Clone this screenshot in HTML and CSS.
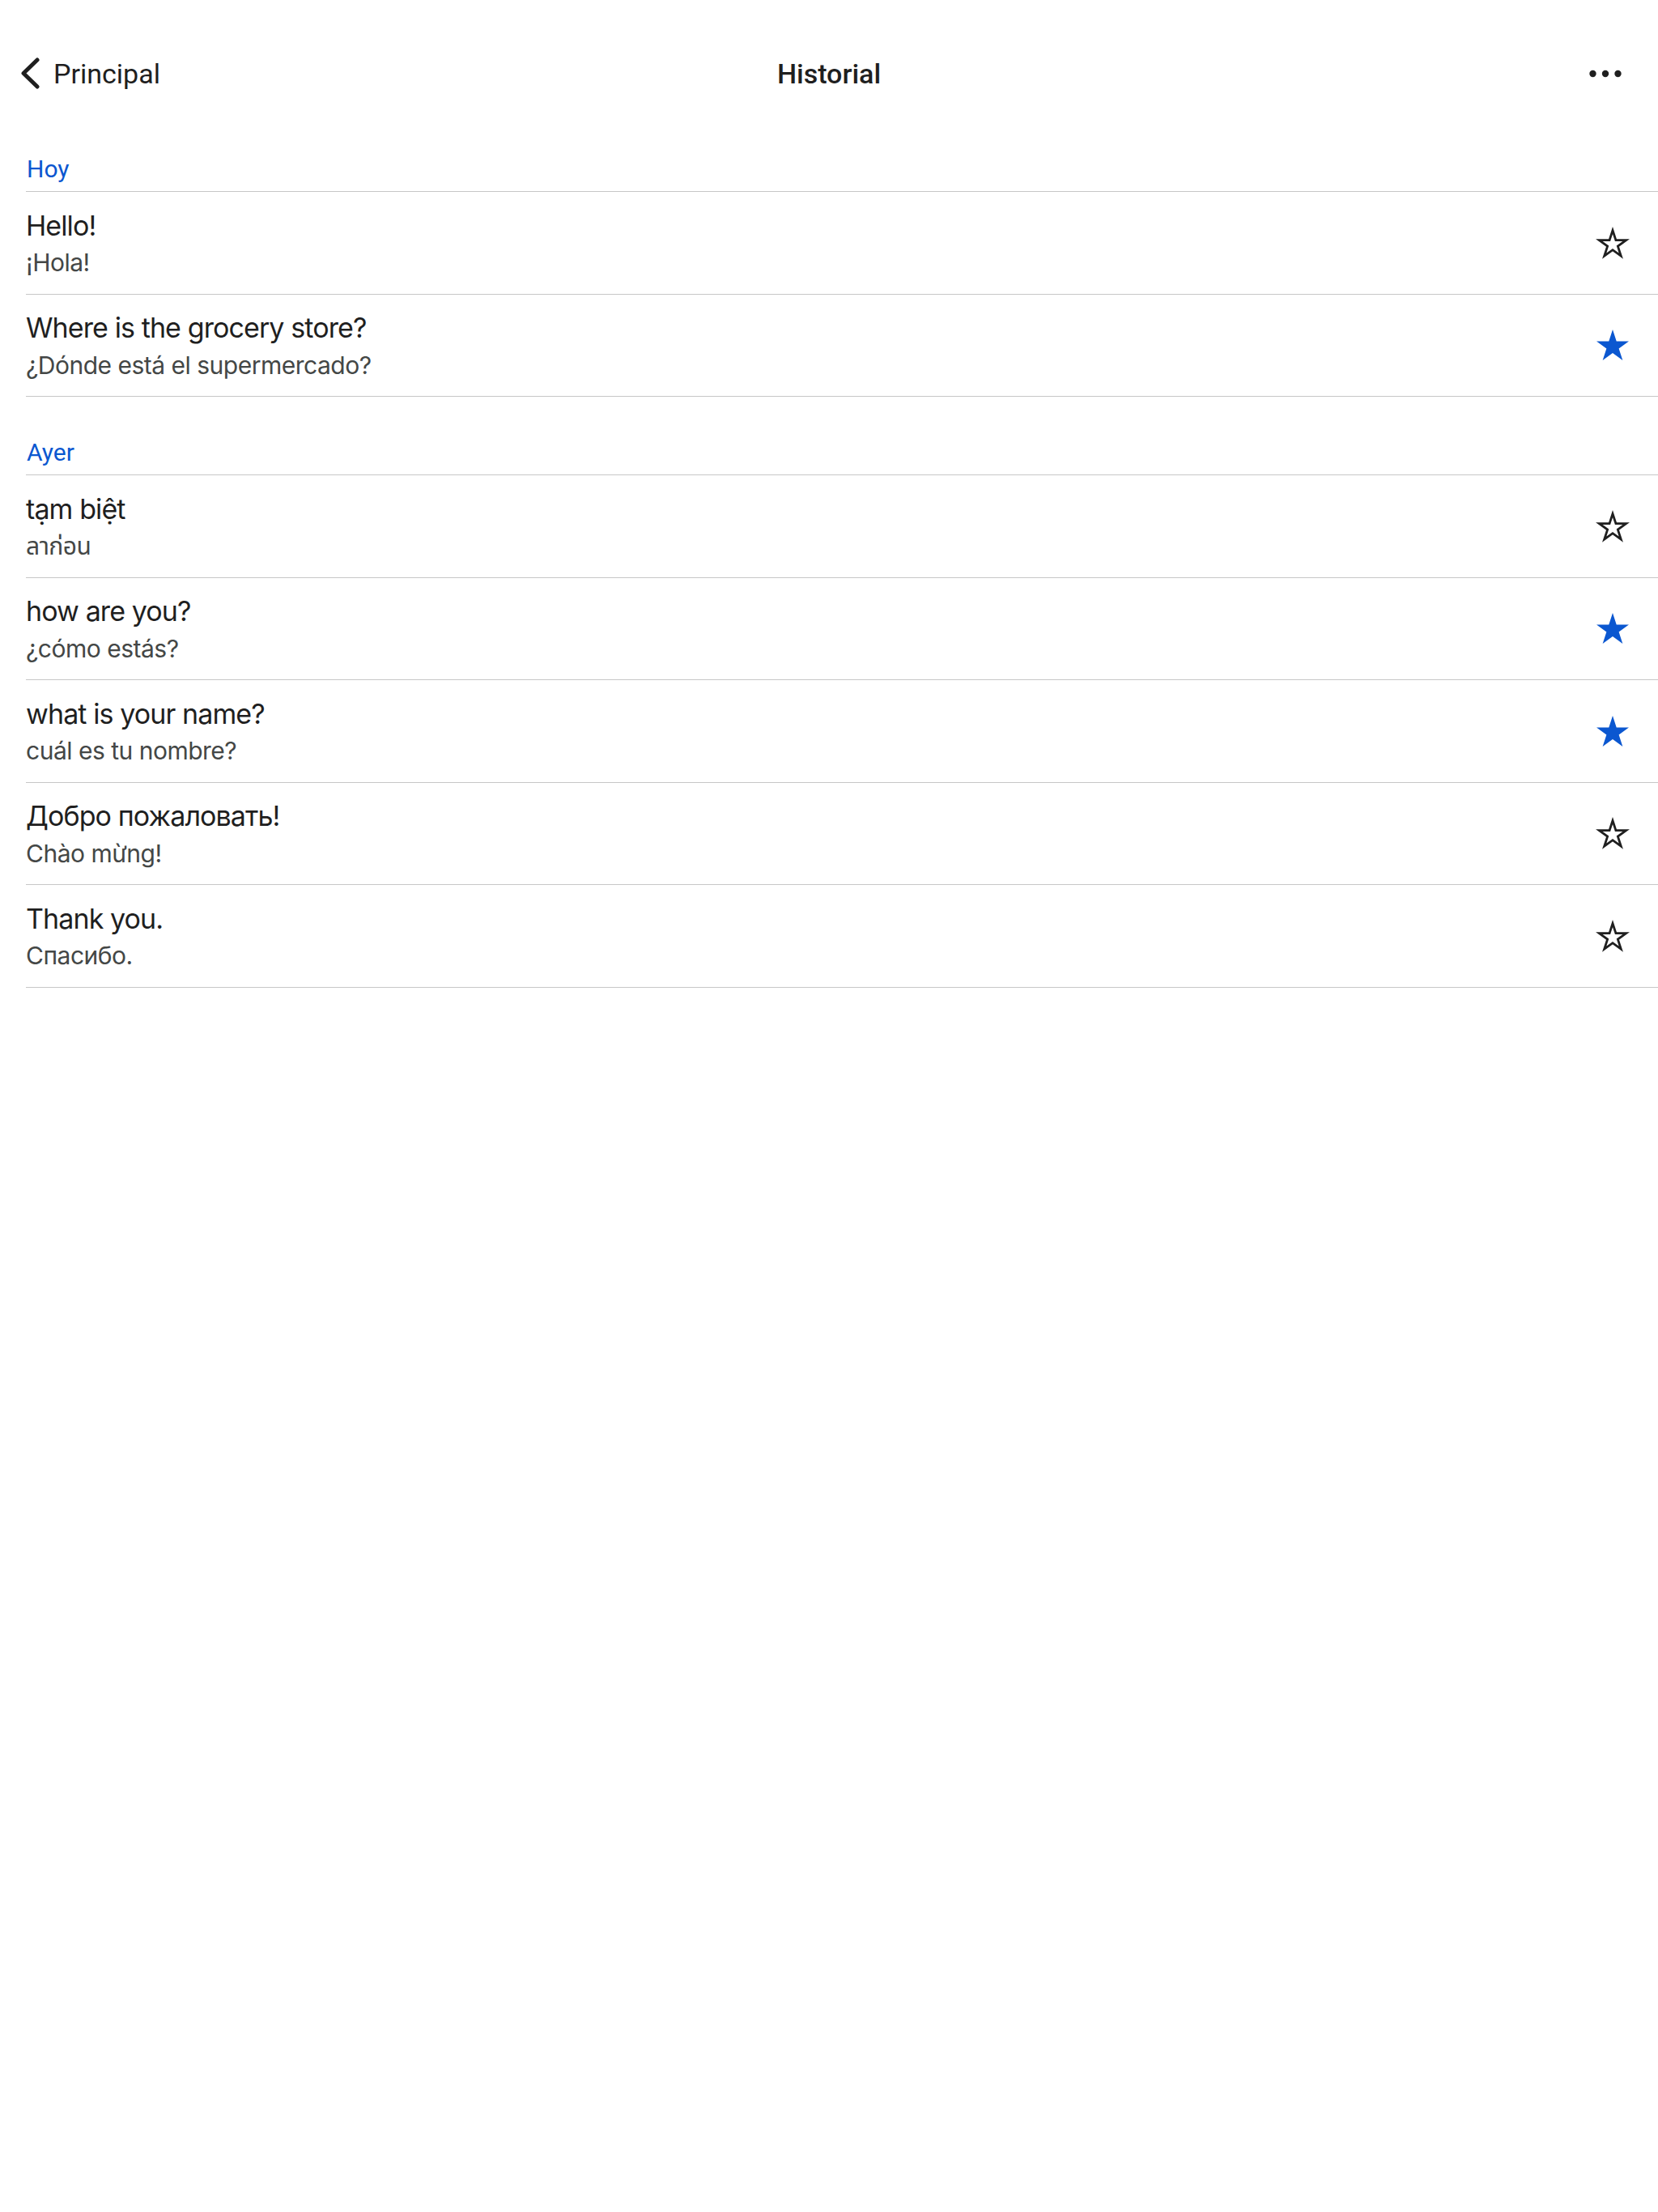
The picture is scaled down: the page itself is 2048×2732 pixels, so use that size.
FILE: index.html
```html
<!DOCTYPE html>
<html lang="es">
<head>
<meta charset="utf-8">
<title>Historial</title>
<link rel="stylesheet" href="styles.css">
</head>
<body>
<header class="nav">
  <div class="back">
    <svg class="chevron" width="30" height="40" viewBox="0 0 30 40"><path d="M26 3 L9 19.5 L26 36" fill="none" stroke="#1f1f1f" stroke-width="5" stroke-linecap="round" stroke-linejoin="round"/></svg>
    <span class="back-label">Principal</span>
  </div>
  <div class="title">Historial</div>
  <div class="more">
    <svg width="40" height="12" viewBox="0 0 40 12"><circle cx="4.5" cy="6" r="4.2" fill="#1f1f1f"/><circle cx="20" cy="6" r="4.2" fill="#1f1f1f"/><circle cx="35.5" cy="6" r="4.2" fill="#1f1f1f"/></svg>
  </div>
</header>

<main class="list">
  <section class="group">
    <div class="group-head"><span>Hoy</span></div>
    <div class="row">
      <div class="texts"><div class="src">Hello!</div><div class="dst">¡Hola!</div></div>
      <svg class="star" width="48" height="48" viewBox="0 0 48 48"><polygon class="star-outline" points="24,8.5 27.93,20.59 40.64,20.59 30.36,28.07 34.29,40.16 24,32.69 13.71,40.16 17.64,28.07 7.36,20.59 20.07,20.59"/></svg>
    </div>
    <div class="row">
      <div class="texts"><div class="src">Where is the grocery store?</div><div class="dst">¿Dónde está el supermercado?</div></div>
      <svg class="star" width="48" height="48" viewBox="0 0 48 48"><polygon class="star-filled" points="24,5 28.71,19.51 43.97,19.51 31.63,28.48 36.34,42.99 24,34.02 11.66,42.99 16.37,28.48 4.03,19.51 19.29,19.51"/></svg>
    </div>
  </section>

  <section class="group">
    <div class="group-head"><span>Ayer</span></div>
    <div class="row">
      <div class="texts"><div class="src">tạm biệt</div><div class="dst">ลาก่อน</div></div>
      <svg class="star" width="48" height="48" viewBox="0 0 48 48"><polygon class="star-outline" points="24,8.5 27.93,20.59 40.64,20.59 30.36,28.07 34.29,40.16 24,32.69 13.71,40.16 17.64,28.07 7.36,20.59 20.07,20.59"/></svg>
    </div>
    <div class="row">
      <div class="texts"><div class="src">how are you?</div><div class="dst">¿cómo estás?</div></div>
      <svg class="star" width="48" height="48" viewBox="0 0 48 48"><polygon class="star-filled" points="24,5 28.71,19.51 43.97,19.51 31.63,28.48 36.34,42.99 24,34.02 11.66,42.99 16.37,28.48 4.03,19.51 19.29,19.51"/></svg>
    </div>
    <div class="row">
      <div class="texts"><div class="src">what is your name?</div><div class="dst">cuál es tu nombre?</div></div>
      <svg class="star" width="48" height="48" viewBox="0 0 48 48"><polygon class="star-filled" points="24,5 28.71,19.51 43.97,19.51 31.63,28.48 36.34,42.99 24,34.02 11.66,42.99 16.37,28.48 4.03,19.51 19.29,19.51"/></svg>
    </div>
    <div class="row">
      <div class="texts"><div class="src">Добро пожаловать!</div><div class="dst">Chào mừng!</div></div>
      <svg class="star" width="48" height="48" viewBox="0 0 48 48"><polygon class="star-outline" points="24,8.5 27.93,20.59 40.64,20.59 30.36,28.07 34.29,40.16 24,32.69 13.71,40.16 17.64,28.07 7.36,20.59 20.07,20.59"/></svg>
    </div>
    <div class="row">
      <div class="texts"><div class="src">Thank you.</div><div class="dst">Спасибо.</div></div>
      <svg class="star" width="48" height="48" viewBox="0 0 48 48"><polygon class="star-outline" points="24,8.5 27.93,20.59 40.64,20.59 30.36,28.07 34.29,40.16 24,32.69 13.71,40.16 17.64,28.07 7.36,20.59 20.07,20.59"/></svg>
    </div>
  </section>
</main>
</body>
</html>
```

FILE: styles.css
```css
* { box-sizing: border-box; }
html, body {
  margin: 0;
  padding: 0;
  background: #ffffff;
}
body {
  width: 2048px;
  min-height: 2732px;
  font-family: Inter, "Noto Sans", "Noto Sans Thai", sans-serif;
  color: #1f1f1f;
}

.nav {
  height: 140px;
  padding: 48px 20px 6px 20px;
  display: grid;
  grid-template-columns: 1fr auto 1fr;
  align-items: center;
}
.back {
  display: flex;
  align-items: center;
  gap: 16px;
}
.chevron { display: block; }
.back-label {
  font-family: Roboto, "Noto Sans", sans-serif;
  font-size: 34px;
  line-height: 40px;
  color: #1f1f1f;
}
.title {
  font-family: Roboto, "Noto Sans", sans-serif;
  font-weight: 500;
  font-size: 34px;
  line-height: 40px;
  color: #1f1f1f;
}
.more {
  justify-self: end;
  display: flex;
  align-items: center;
  margin-right: 25px;
}
.more svg { display: block; }

.list {
  margin-left: 32px;
}
.group-head {
  height: 97px;
  display: flex;
  align-items: flex-end;
  padding-bottom: 9px;
  border-bottom: 1px solid #c7c7c7;
}
.group-head span {
  font-family: Roboto, "Noto Sans", sans-serif;
  font-size: 30px;
  line-height: 36px;
  color: #0b57d0;
  padding-left: 1px;
}
.row {
  height: 126.5px;
  display: flex;
  align-items: center;
  justify-content: space-between;
  padding-right: 32px;
  border-bottom: 1px solid #c7c7c7;
}
.texts {
  padding-top: 3px;
}
.src {
  font-size: 34px;
  line-height: 44px;
  letter-spacing: -0.9px;
  color: #1f1f1f;
}
.dst {
  margin-top: 1.5px;
  font-size: 30px;
  line-height: 44px;
  letter-spacing: -0.5px;
  color: #444746;
}
.star { display: block; flex: none; }
.star-outline {
  fill: none;
  stroke: #1f1f1f;
  stroke-width: 2.8;
  stroke-linejoin: miter;
  stroke-miterlimit: 10;
}
.star-filled {
  fill: #0b57d0;
}
```
